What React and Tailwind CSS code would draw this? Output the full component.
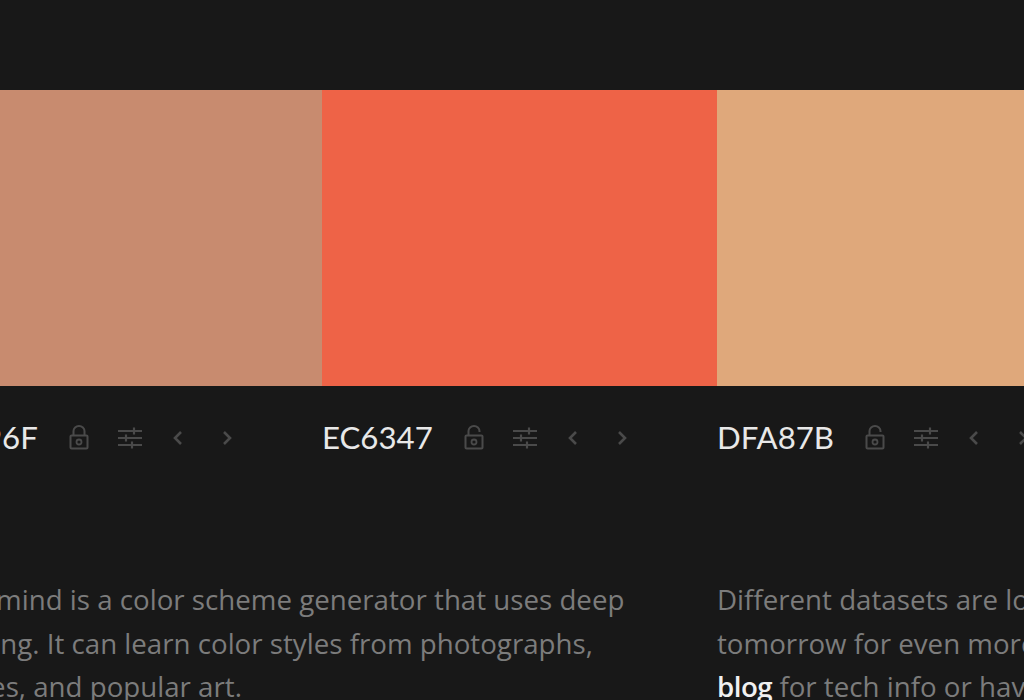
// swatch columns, the first one hangs off the left edge of the page
const colors = [
  { label: 'C8896F', bg: 'bg-[#c88b6f]', open: false },
  { label: 'EC6347', bg: 'bg-[#ee6347]', open: true },
  { label: 'DFA87B', bg: 'bg-[#dfa87b]', open: true },
];

const LockIcon = ({ open }) => (
  <svg width="20" height="25" viewBox="0 0 20 25" fill="none" stroke="currentColor" strokeWidth="2">
    <path d={open ? 'M4.5 10.5V6a5.5 5 0 0 1 11 0v1' : 'M4.5 10.5V6a5.5 5 0 0 1 11 0v4.5'} />
    <rect x="1.5" y="10.5" width="17" height="13" rx="1" />
    <circle cx="10" cy="17" r="2.5" strokeWidth="1.8" />
  </svg>
);

const SlidersIcon = () => (
  <svg width="26" height="24" viewBox="0 0 26 24" fill="none" stroke="currentColor" strokeWidth="2.2">
    <path d="M1 5h24M1 12h24M1 19h24" />
    <path d="M17 1.5v7M9 8.5v7M15 15.5v7" />
  </svg>
);

const ChevronIcon = ({ right }) => (
  <svg width="12" height="16" viewBox="0 0 12 16" fill="none" stroke="currentColor" strokeWidth="2.6">
    <path d={right ? 'M3 2l6 6-6 6' : 'M9 2L3 8l6 6'} />
  </svg>
);

function Swatch({ color }) {
  return (
    <div className="w-[395px] shrink-0">
      <div className={`${color.bg} h-[296px]`} />
      <div className="flex items-center h-[106px]">
        <span className="font-['Lato',sans-serif] text-[31.2px] leading-none text-[#e8e8e8] mr-[31px] mt-[-2px]">
          {color.label}
        </span>
        <div className="flex items-center text-[#4a4a4a] mt-[-3px]">
          <LockIcon open={color.open} />
          <span className="ml-[28px]"><SlidersIcon /></span>
          <span className="ml-[29px]"><ChevronIcon /></span>
          <span className="ml-[37px]"><ChevronIcon right /></span>
        </div>
      </div>
    </div>
  );
}

export default function App() {
  return (
    <div className="w-[1024px] h-[700px] overflow-hidden bg-[#181818] font-['Open_Sans',sans-serif]">
      <div className="ml-[-73px] w-[1185px] pt-[90px]">
        <div className="flex">
          {colors.map((color) => (
            <Swatch key={color.label} color={color} />
          ))}
        </div>
        <div className="flex mt-[86px] text-[27.7px] leading-[43.5px] text-[#7c7c7c] whitespace-nowrap">
          <p className="w-[790px] shrink-0">
            Colormind is a color scheme generator that uses deep
            <br />
            learning. It can learn color styles from photographs,
            <br />
            movies, and popular art.
          </p>
          <p className="w-[395px] shrink-0">
            Different datasets are loaded every day. Check back
            <br />
            tomorrow for even more color inspiration. Read the
            <br />
            <a className="font-semibold tracking-[-0.5px] text-[#f0f0f0]">blog</a> for tech info or have fun with the API.
          </p>
        </div>
      </div>
    </div>
  );
}
